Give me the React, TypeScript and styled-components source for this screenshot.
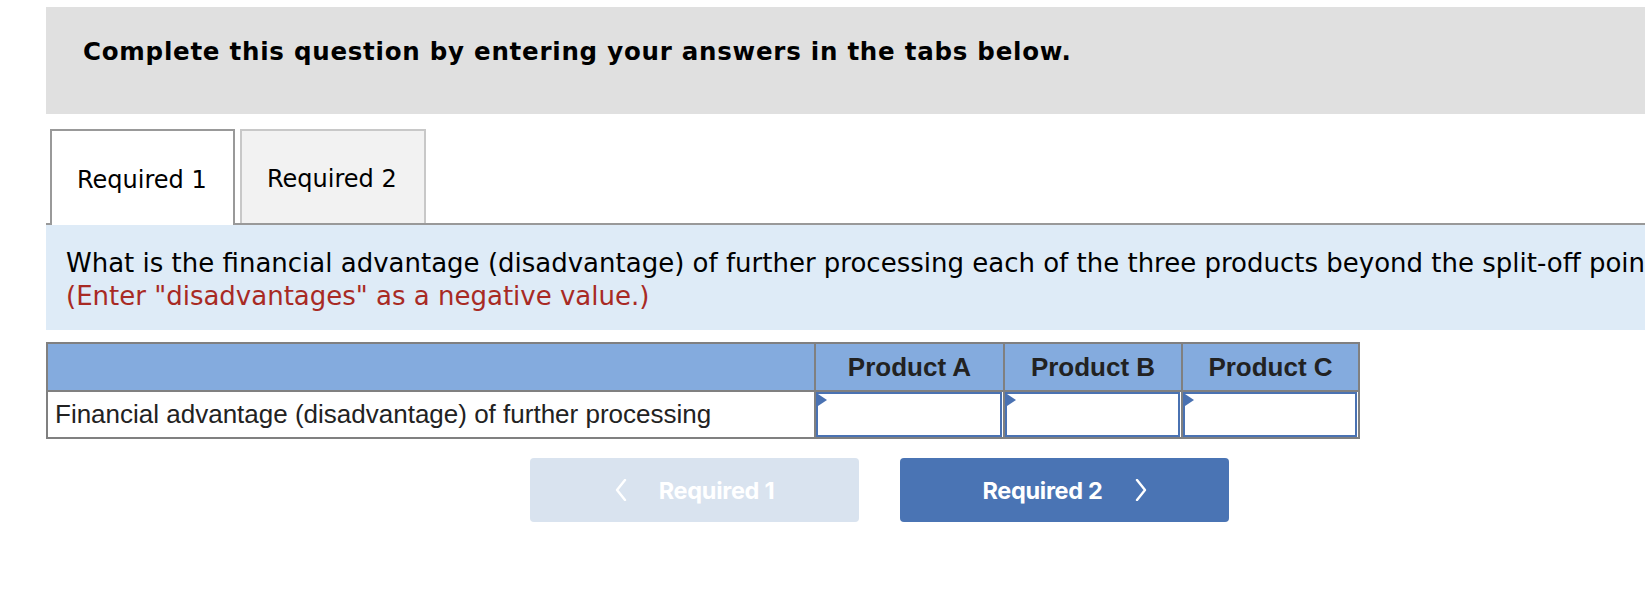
import React from 'react';
import styled, { createGlobalStyle, css } from 'styled-components';

const GlobalStyle = createGlobalStyle`
  html, body {
    margin: 0;
    padding: 0;
    background: #fff;
    overflow: hidden;
  }
  body {
    font-family: "DejaVu Sans", Verdana, sans-serif;
    color: #000;
  }
`;

const Page = styled.div`
  width: 1667px;
  padding: 7px 0 0 46px;
`;

const Instructions = styled.div`
  height: 107px;
  box-sizing: border-box;
  background: #e0e0e0;
  padding: 30px 0 0 37px;
  font-weight: bold;
  font-size: 24.5px;
  letter-spacing: 0.75px;
  line-height: 30px;
`;

const TabBar = styled.div`
  display: flex;
  gap: 5px;
  margin-top: 15px;
  padding-left: 4px;
  border-bottom: 2px solid #999;
`;

const Tab = styled.div<{ $active?: boolean; $w: number }>`
  width: ${({ $w }) => $w}px;
  height: 94px;
  box-sizing: border-box;
  display: flex;
  align-items: center;
  padding: 4px 0 0 25px;
  font-size: 24px;
  border: 2px solid #c8c8c8;
  border-bottom: none;
  background: #f2f2f2;
  ${({ $active }) =>
    $active &&
    css`
      height: 96px;
      margin-bottom: -2px;
      border-color: #999;
      background: #fff;
    `}
`;

const Question = styled.div`
  background: #deebf7;
  padding: 22px 20px 17px;
  font-size: 26px;
  line-height: 33px;
  white-space: nowrap;
`;

const Hint = styled.div`
  color: #a82a24;
`;

const Grid = styled.div`
  display: grid;
  grid-template-columns: 766px 189px 178px 177px;
  grid-template-rows: 46px 47px;
  box-sizing: border-box;
  width: 1314px;
  margin-top: 12px;
  border: 2px solid #808080;
  font-family: "Liberation Sans", Arial, sans-serif;
  font-size: 26px;
  color: #222;
`;

const HeadCell = styled.div<{ $first?: boolean }>`
  background: #84abde;
  display: flex;
  align-items: center;
  justify-content: center;
  font-weight: bold;
  ${({ $first }) => !$first && css`border-left: 2px solid #808080;`}
`;

const LabelCell = styled.div`
  display: flex;
  align-items: center;
  padding-left: 7px;
  border-top: 2px solid #808080;
`;

const InputCell = styled.div`
  border-top: 2px solid #808080;
  border-left: 2px solid #808080;
  padding: 0 1px 0 0;
  display: flex;
`;

const InputBox = styled.div`
  position: relative;
  flex: 1;
  border: 2px solid #4a72b2;
  background: #fff;
`;

const Flag = styled.span`
  position: absolute;
  left: 0;
  top: 0;
  width: 0;
  height: 0;
  border-top: 6px solid transparent;
  border-bottom: 6px solid transparent;
  border-left: 9px solid #4a72b2;
`;

const NavRow = styled.div`
  display: flex;
  justify-content: center;
  gap: 41px;
  margin-top: 19px;
`;

const NavButton = styled.button<{ $disabled?: boolean }>`
  width: 329px;
  height: 64px;
  border: none;
  border-radius: 4px;
  display: flex;
  align-items: center;
  justify-content: center;
  gap: 32px;
  font-family: Inter, "Liberation Sans", sans-serif;
  font-weight: 700;
  font-size: 23.5px;
  letter-spacing: -0.3px;
  color: #fff;
  background: ${({ $disabled }) => ($disabled ? '#d9e3ef' : '#4a74b4')};
  cursor: ${({ $disabled }) => ($disabled ? 'default' : 'pointer')};
`;

const Chevron = ({ dir }: { dir: 'left' | 'right' }) => (
  <svg width="12" height="22" viewBox="0 0 12 22" fill="none">
    <polyline
      points={dir === 'left' ? '10,1 2,11 10,21' : '2,1 10,11 2,21'}
      stroke="#fff"
      strokeWidth="2.4"
      strokeLinecap="round"
      strokeLinejoin="round"
    />
  </svg>
);

const products = ['Product A', 'Product B', 'Product C'];

export default function App() {
  return (
    <>
      <GlobalStyle />
      <Page>
        <Instructions>Complete this question by entering your answers in the tabs below.</Instructions>

        <TabBar>
          <Tab $active $w={185}>Required 1</Tab>
          <Tab $w={186}>Required 2</Tab>
        </TabBar>

        <Question>
          <div>
            What is the financial advantage (disadvantage) of further processing each of the three products beyond the split-off point?
          </div>
          <Hint>(Enter "disadvantages" as a negative value.)</Hint>
        </Question>

        <Grid>
          <HeadCell $first />
          {products.map((p) => (
            <HeadCell key={p}>{p}</HeadCell>
          ))}
          <LabelCell>Financial advantage (disadvantage) of further processing</LabelCell>
          {products.map((p) => (
            <InputCell key={p}>
              <InputBox>
                <Flag />
              </InputBox>
            </InputCell>
          ))}
        </Grid>

        <NavRow>
          <NavButton $disabled>
            <Chevron dir="left" />
            Required 1
          </NavButton>
          <NavButton>
            Required 2
            <Chevron dir="right" />
          </NavButton>
        </NavRow>
      </Page>
    </>
  );
}
